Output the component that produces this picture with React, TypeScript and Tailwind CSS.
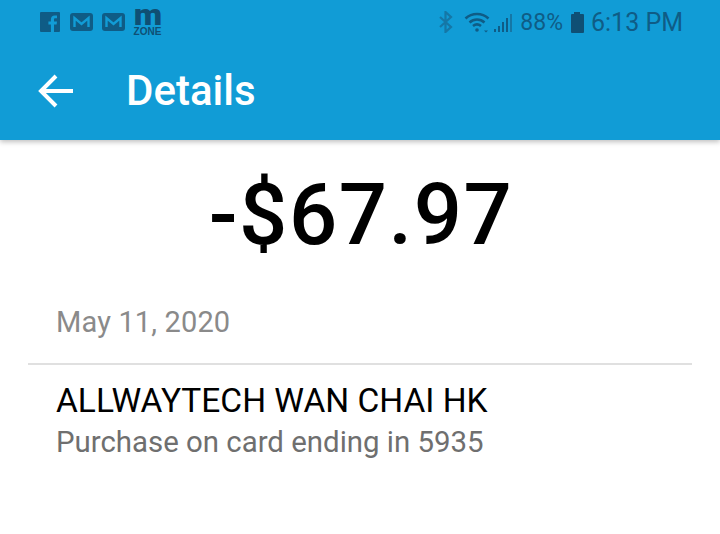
const roboto = { fontFamily: "Roboto, sans-serif" };

function StatusLeft() {
  return (
    <div className="flex items-center gap-[9px] text-[#0f5c86]">
      {/* Facebook */}
      <svg width="21" height="20" viewBox="0 0 21 20" className="mt-[1px]">
        <rect x="0" y="0" width="20" height="20" rx="1" fill="#0f5c86" />
        <path d="M14 20v-7.500h2.600l.4-3h-3V7.700c0-.9.3-1.400 1.500-1.400H17V3.600c-.3 0-1.200-.1-2.300-.1-2.300 0-3.800 1.400-3.800 3.900v2.100H8.400v3h2.500V20z" fill="#119cd6" />
      </svg>
      {[0, 1].map((i) => (
        <svg key={i} width="23" height="18" viewBox="0 0 23 18" className="mt-[1px]">
          <rect x="0" y="0" width="23" height="18" rx="3" fill="#0f5c86" />
          <path d="M4.500 14V5l7 6 7-6v9" fill="none" stroke="#119cd6" strokeWidth="2.400" />
        </svg>
      ))}
      {/* m zone */}
      <div className="flex flex-col items-center w-[27px] mb-[3px] text-[#0f4f74]">
        <span className="text-[30px] leading-[20px] font-black scale-x-110" style={roboto}>m</span>
        <span className="text-[10px] leading-[9px] font-black mt-[2px]" style={{ fontFamily: "'Liberation Sans', sans-serif" }}>ZONE</span>
      </div>
    </div>
  );
}

function StatusRight() {
  return (
    <div className="flex items-center text-[#0f5c86]">
      <svg width="16" height="22" viewBox="0 0 16 22" className="mr-[10px]" fill="none" stroke="#1577a6" strokeWidth="2.200">
        <path d="M2 6l11 10-5.500 5V1L13 6 2 16" />
      </svg>
      <svg width="26" height="22" viewBox="0 0 26 22" className="mr-[4px]" fill="none" stroke="#0f5c86" strokeWidth="2.600">
        <path d="M1.500 7.500c6.500-6 16.500-6 23 0" />
        <path d="M5.500 11.500c4.500-4 10.500-4 15 0" />
        <path d="M9 15c2.500-2 5.500-2 8 0" />
        <circle cx="13" cy="19" r="1.800" fill="#0f5c86" stroke="none" />
        <path d="M20 19.500h4l-2 2z" fill="#0f5c86" stroke="none" />
      </svg>
      <div className="flex items-end gap-[2px] h-[20px] mr-[8px] mt-[1px]">
        <div className="w-[2px] h-[3px] bg-[#0f5c86]" />
        <div className="w-[2px] h-[6px] bg-[#0f5c86]" />
        <div className="w-[2px] h-[10px] bg-[#0f5c86]" />
        <div className="w-[2px] h-[14px] bg-[#0f5c86]" />
        <div className="w-[2px] h-[18px] bg-[#1577a6]" />
      </div>
      <span className="text-[23px] leading-none mr-[8px] mt-[1px]" style={roboto}>88%</span>
      <div className="flex flex-col items-center mr-[7px] mt-[1px]">
        <div className="w-[6px] h-[2px] bg-[#0f4f74]" />
        <div className="w-[13px] h-[19px] bg-[#0f4f74] rounded-[1px]" />
      </div>
      <span className="text-[25px] leading-none mt-[1px]" style={roboto}>6:13 PM</span>
    </div>
  );
}

export default function App() {
  return (
    <div className="w-[720px] h-[534px] bg-white overflow-hidden" style={roboto}>
      <header className="h-[140px] bg-[#119cd6] shadow-[0_2px_5px_rgba(0,0,0,0.25)] relative">
        <div className="h-[43px] flex items-center justify-between pl-[40px] pr-[37px]">
          <StatusLeft />
          <StatusRight />
        </div>
        <div className="h-[97px] flex items-center pl-[38px] pb-[2px]">
          <svg width="36" height="34" viewBox="0 0 36 34" fill="none" stroke="white" strokeWidth="4" className="mr-[52px]">
            <path d="M35 17H3M18 2L3 17l15 15" />
          </svg>
          <h1 className="text-[42px] leading-none font-medium text-white">Details</h1>
        </div>
      </header>
      <main className="flex flex-col">
        <div className="text-center text-[85px] leading-none font-medium text-black tracking-[1.500px] mt-[33px] pl-[2px]">-$67.97</div>
        <div className="text-[29px] leading-none tracking-[0.15px] text-[#8a8a8a] ml-[56px] mt-[50px]">May 11, 2020</div>
        <div className="h-[2px] bg-[#e0e0e0] mx-[28px] mt-[26px]" />
        <div className="text-[33.500px] leading-none text-black ml-[56px] mt-[19px]">ALLWAYTECH WAN CHAI HK</div>
        <div className="text-[29.400px] leading-none text-[#6f6f6f] ml-[56px] mt-[10px]">Purchase on card ending in 5935</div>
      </main>
    </div>
  );
}
